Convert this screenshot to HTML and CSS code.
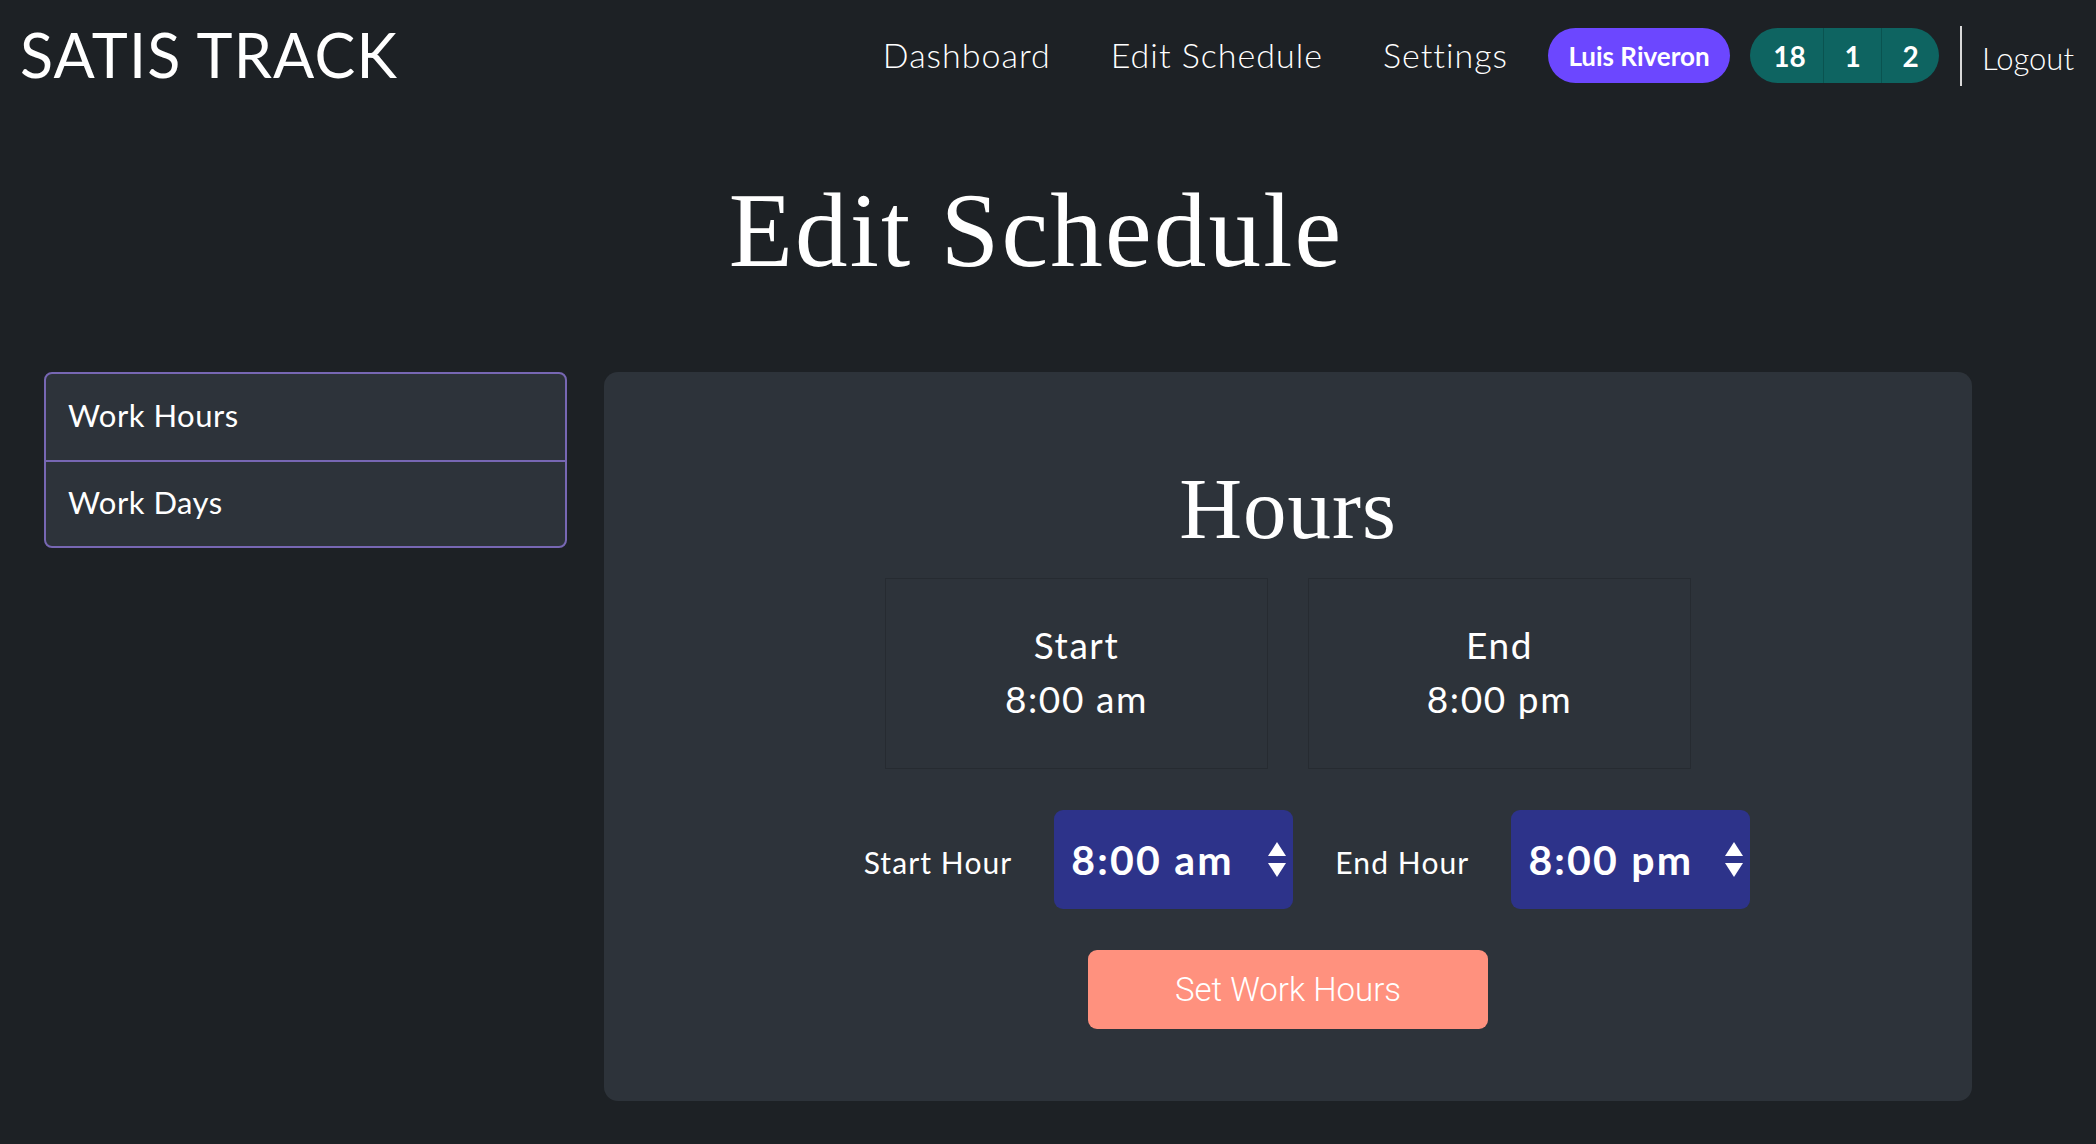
FILE: index.html
```html
<!DOCTYPE html>
<html lang="en">
<head>
<meta charset="utf-8">
<title>Satis Track - Edit Schedule</title>
<link rel="stylesheet" href="styles.css">
</head>
<body>
<header class="topbar">
  <div class="logo">SATIS TRACK</div>
  <nav class="nav">
    <a class="nav-link" href="#">Dashboard</a>
    <a class="nav-link" href="#">Edit Schedule</a>
    <a class="nav-link" href="#">Settings</a>
    <span class="user-pill">Luis Riveron</span>
    <div class="stats"><span class="stat stat-wide">18</span><span class="stat">1</span><span class="stat">2</span></div>
    <span class="sep"></span>
    <a class="logout" href="#">Logout</a>
  </nav>
</header>
<h1 class="page-title">Edit Schedule</h1>
<main class="layout">
  <aside class="side-list">
    <div class="side-item">Work Hours</div>
    <div class="side-item">Work Days</div>
  </aside>
  <section class="card">
    <h2 class="card-title">Hours</h2>
    <div class="boxes">
      <div class="time-box"><div>Start</div><div>8:00 am</div></div>
      <div class="time-box"><div>End</div><div>8:00 pm</div></div>
    </div>
    <div class="select-row">
      <span class="sel-label">Start Hour</span>
      <div class="select"><span>8:00 am</span>
        <svg class="arrows" width="18" height="35" viewBox="0 0 18 35"><path d="M9 0 L18 14 L0 14 Z" fill="#fff"/><path d="M0 21 L18 21 L9 35 Z" fill="#fff"/></svg>
      </div>
      <span class="sel-label">End Hour</span>
      <div class="select"><span>8:00 pm</span>
        <svg class="arrows" width="18" height="35" viewBox="0 0 18 35"><path d="M9 0 L18 14 L0 14 Z" fill="#fff"/><path d="M0 21 L18 21 L9 35 Z" fill="#fff"/></svg>
      </div>
    </div>
    <button class="submit" type="button">Set Work Hours</button>
  </section>
</main>
</body>
</html>
```

FILE: styles.css
```css
* { box-sizing: border-box; }
html, body { margin: 0; padding: 0; }
body {
  background: #1d2125;
  color: #fff;
  font-family: "Lato", "Open Sans", sans-serif;
  width: 2096px;
  height: 1144px;
  overflow: hidden;
}
.topbar {
  height: 111px;
  display: flex;
  align-items: center;
  justify-content: space-between;
  padding: 0 22px 0 20px;
}
.logo {
  font-size: 61px;
  font-weight: 400;
  letter-spacing: 1.2px;
  line-height: 1;
  margin-top: -2px;
}
.nav {
  display: flex;
  align-items: center;
}
.nav-link {
  color: #fff;
  text-decoration: none;
  font-size: 34px;
  font-weight: 300;
  letter-spacing: 1px;
  margin-right: 60px;
  margin-top: -2px;
}
.nav-link:nth-child(3) { margin-right: 40px; }
.user-pill {
  background: #6c47ff;
  border-radius: 28px;
  height: 55px;
  width: 182px;
  display: flex;
  align-items: center;
  justify-content: center;
  font-size: 26px;
  font-weight: 700;
  margin-right: 20px;
}
.stats {
  display: flex;
  height: 55px;
  border-radius: 28px;
  overflow: hidden;
  background: #0e6461;
  margin-right: 21px;
}
.stat {
  width: 58px;
  display: flex;
  align-items: center;
  justify-content: center;
  font-size: 28px;
  font-weight: 700;
  border-left: 1px solid #0a5350;
}
.stat-wide { width: 73px; border-left: none; padding-left: 6px; }
.sep {
  width: 2px;
  height: 60px;
  background: #d9d9d9;
  margin-right: 20px;
}
.logout {
  color: #fff;
  text-decoration: none;
  font-size: 31px;
  font-weight: 300;
  margin-top: 4px;
}
.page-title {
  margin: 0;
  font-family: "Liberation Serif", "Times New Roman", serif;
  font-weight: 400;
  font-size: 105px;
  letter-spacing: 2.2px;
  line-height: 1;
  text-align: center;
  padding: 67px 24px 0 0;
  height: 261px;
}
.layout {
  display: flex;
  align-items: flex-start;
  gap: 37px;
  padding-left: 44px;
}
.side-list {
  width: 523px;
  border: 2px solid #7767b3;
  border-radius: 8px;
  background: #2d333a;
  overflow: hidden;
}
.side-item {
  height: 86px;
  display: flex;
  align-items: center;
  padding: 0 0 4px 22px;
  font-size: 31px;
  letter-spacing: 0.5px;
  font-weight: 400;
}
.side-item + .side-item { border-top: 2px solid #7767b3; }
.card {
  width: 1368px;
  height: 729px;
  background: #2d333a;
  border-radius: 14px;
  display: flex;
  flex-direction: column;
  align-items: center;
  padding-top: 93px;
}
.card-title {
  margin: 0;
  font-family: "Liberation Serif", "Times New Roman", serif;
  font-weight: 400;
  font-size: 87px;
  letter-spacing: 1px;
  line-height: 1;
  height: 113px;
}
.boxes {
  display: flex;
  gap: 40px;
}
.time-box {
  width: 383px;
  height: 191px;
  border: 1px solid #262b31;
  display: flex;
  flex-direction: column;
  align-items: center;
  justify-content: center;
  font-size: 37px;
  letter-spacing: 1.6px;
  line-height: 54px;
  font-weight: 400;
  padding-bottom: 4px;
}
.select-row {
  display: flex;
  align-items: center;
  margin-top: 41px;
  padding-left: 38px;
}
.sel-label {
  font-size: 30px;
  font-weight: 400;
  letter-spacing: 1.1px;
  margin-right: 42px;
  margin-top: 4px;
}
.select {
  width: 239px;
  height: 99px;
  background: #2d338a;
  border-radius: 9px;
  display: flex;
  align-items: center;
  justify-content: space-between;
  padding: 0 7px 0 17px;
  font-size: 41px;
  letter-spacing: 2.2px;
  font-weight: 700;
  margin-right: 42px;
}
.select:last-child { margin-right: 0; }
.arrows { display: block; }
.submit {
  margin-top: 41px;
  width: 400px;
  height: 79px;
  border: none;
  border-radius: 9px;
  background: #ff917e;
  color: #fff;
  font-family: "Roboto", sans-serif;
  font-weight: 300;
  font-size: 33px;
  padding: 0;
}
```
